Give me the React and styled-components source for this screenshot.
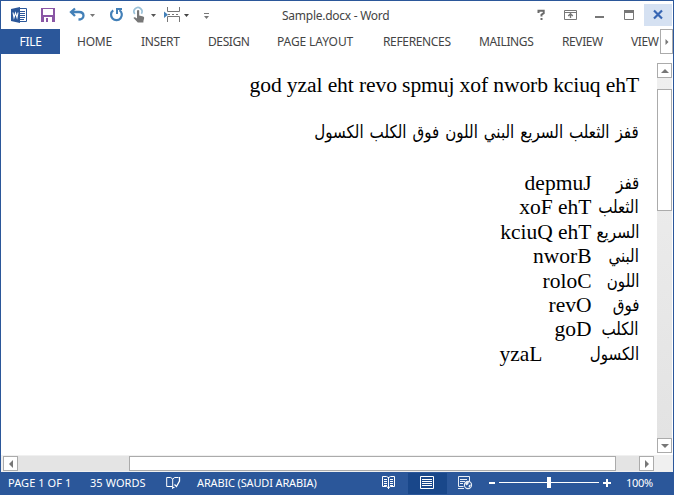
import React from "react";
import styled, { createGlobalStyle } from "styled-components";

const Global = createGlobalStyle`
  * { box-sizing: border-box; }
  body { margin: 0; background: #fff; overflow: hidden; }
  svg { display: block; }
`;

const Window = styled.div`
  width: 674px;
  height: 495px;
  display: flex;
  flex-direction: column;
  background: #fff;
  border: 1px solid #2b579a;
  border-bottom: 0;
  font-family: "Noto Sans", "Open Sans", sans-serif;
  color: #444;
  overflow: hidden;
`;

const TitleBar = styled.header`
  height: 28px;
  display: flex;
  flex: none;
`;

const QuickTools = styled.div`
  width: 281px;
  flex: none;
`;

const Title = styled.div`
  width: 239px;
  flex: none;
  font-size: 12px;
  line-height: 29px;
  letter-spacing: -0.26px;
  white-space: nowrap;
`;

const WindowControls = styled.div`
  width: 152px;
  flex: none;
`;

const Ribbon = styled.nav`
  height: 26px;
  flex: none;
  display: flex;
  align-items: flex-start;
`;

const FileTab = styled.div`
  width: 59px;
  height: 25px;
  margin-right: 17px;
  flex: none;
  background: #2b579a;
  color: #fff;
  font-size: 12px;
  line-height: 25px;
  text-align: center;
  letter-spacing: -0.3px;
`;

const Tab = styled.div`
  width: ${(p) => p.$width}px;
  margin-right: ${(p) => (p.$last ? 0 : 29)}px;
  flex: none;
  font-size: 12px;
  line-height: 25px;
  letter-spacing: ${(p) => p.$spacing}px;
  white-space: nowrap;
`;

const TabScroller = styled.button`
  width: 13px;
  height: 25px;
  margin-left: 1px;
  padding: 0;
  flex: none;
  display: grid;
  place-items: center;
  background: #fff;
  border: 1px solid #ababab;
`;

const Workspace = styled.main`
  height: 400px;
  flex: none;
  display: flex;
`;

const Page = styled.article`
  width: 655px;
  padding: 18px 17px 0 0;
  font-family: "Liberation Serif", serif;
  color: #000;
`;

const Line = styled.p`
  height: 25px;
  margin: 0 0 ${(p) => p.$after}px;
  font-size: 21.6px;
  line-height: 25px;
  letter-spacing: -0.12px;
  text-align: right;
  white-space: nowrap;
`;

const Arabic = styled.span`
  display: inline-block;
  font-family: "DejaVu Sans", sans-serif;
  font-size: 17.8px;
  letter-spacing: 0;
  word-spacing: 1.3px;
  direction: rtl;
  transform: scaleX(0.85);
  transform-origin: right center;
`;

const Entry = styled.div`
  height: 24.4px;
  display: flex;
  flex-direction: row-reverse;
  line-height: 24.4px;
  white-space: nowrap;
`;

const ArabicCell = styled.div`
  width: ${(p) => (p.$wide ? 96.5 : 47.5)}px;
  flex: none;
  direction: rtl;
`;

const LatinWord = styled.span`
  font-size: 21.5px;
`;

const VerticalScroll = styled.div`
  width: 17px;
  padding: 8px 1px 0 1px;
  display: flex;
  flex-direction: column;
`;

const ScrollButton = styled.button`
  width: 15px;
  height: 15px;
  padding: 0;
  flex: none;
  display: grid;
  place-items: center;
  background: #fff;
  border: 1px solid #ababab;
`;

const VerticalTrack = styled.div`
  height: 360px;
  padding-top: 11px;
  background: linear-gradient(#efefef, #e3e3e3);
`;

const VerticalThumb = styled.div`
  height: 122px;
  background: #fff;
  border: 1px solid #ababab;
`;

const HorizontalScroll = styled.div`
  height: 17px;
  padding: 1px 18px 1px 2px;
  flex: none;
  display: flex;
  background: #f0f0f0;
`;

const HorizontalTrack = styled.div`
  width: 621px;
  padding-left: 111px;
  flex: none;
  background: #e4e4e4;
`;

const HorizontalThumb = styled.div`
  width: 487px;
  height: 15px;
  background: #fff;
  border: 1px solid #ababab;
`;

const StatusBar = styled.footer`
  height: 23px;
  flex: none;
  display: flex;
  background: #2b579a;
  color: #fff;
`;

const StatusText = styled.div`
  width: ${(p) => p.$width}px;
  padding-left: ${(p) => p.$pad || 0}px;
  flex: none;
  font-size: 11px;
  line-height: 22px;
  letter-spacing: ${(p) => p.$spacing}px;
  white-space: nowrap;
`;

const tabs = [
  ["HOME", 35, -0.25],
  ["INSERT", 38, -0.35],
  ["DESIGN", 40, -0.4],
  ["PAGE LAYOUT", 77, -0.1],
  ["REFERENCES", 67, -0.35],
  ["MAILINGS", 54, -0.38],
  ["REVIEW", 40, -0.4],
  ["VIEW", 28, -0.4],
];

const entries = [
  ["قفز", "depmuJ"],
  ["الثعلب", "xoF ehT"],
  ["السريع", "kciuQ ehT"],
  ["البني", "nworB"],
  ["اللون", "roloC"],
  ["فوق", "revO"],
  ["الكلب", "goD"],
  ["الكسول", "yzaL"],
];

const ToolIcons = () => (
  <svg width="280" height="28" viewBox="1 1 280 28">
    <path d="M19 8.5h7.5v13H19z" fill="#fff" stroke="#2b579a" />
    <path d="M20 11.5h5M20 13.5h5M20 15.5h5M20 17.5h5M20 19.5h4" stroke="#2b579a" />
    <path d="M11 9l9-2v16l-9-2z" fill="#2b579a" />
    <path d="M13 12.5l1 5 1.5-4.5 1.5 4.5 1-5" fill="none" stroke="#fff" strokeWidth="1.1" />
    <path d="M41 8h14v14H41z" fill="#8a56a5" />
    <path d="M43 9h10v6H43zM44 17h8v5h-8z" fill="#fff" />
    <path d="M46 18h2v4h-2z" fill="#8a56a5" />
    <path d="M75 8.5L71 12l4 4M71.5 12h7.5c3.5 0 4.5 2 4.5 3.8 0 2.2-2.4 3.7-5 3.7" fill="none" stroke="#4380b8" strokeWidth="2.3" />
    <path d="M90 14h5l-2.5 3z" fill="#777" />
    <path d="M113.2 10.4a5.4 5.4 0 1 0 6.2-.2" fill="none" stroke="#4380b8" strokeWidth="2.2" />
    <path d="M117 14V9H122" fill="none" stroke="#4380b8" strokeWidth="2" />
    <path d="M134.8 14a4 4 0 1 1 6.6-.3" fill="none" stroke="#9bc1d8" strokeWidth="1.7" />
    <path d="M137 10.5q1.2-1 2.2 0v5l4 1q1.3.5.9 2l-.7 2.5V22.5h-5.6L133.5 18q.6-1.4 2-.4l1.5 1z" fill="#777" />
    <path d="M151 14h5l-2.5 3z" fill="#555" />
    <path d="M164 11.5l4 3.2-4 3.3z" fill="#4380b8" />
    <path d="M167.5 7v4.5h12V7M167.5 22v-5.5h12V22M168 14.5h2M172 14.5h2M176 14.5h2" fill="none" stroke="#777" />
    <path d="M184 14h5l-2.5 3z" fill="#444" />
    <path d="M204 13.5h5" stroke="#777" />
    <path d="M204 16h5l-2.5 3z" fill="#777" />
  </svg>
);

const ControlIcons = () => (
  <svg width="152" height="28" viewBox="521 1 152 28">
    <path d="M644 4h28v22h-28z" fill="#d5e1f2" />
    <path d="M538.5 13v-2.2h5.2v2.4l-2.2 1.5v1.8M541.5 18v2" fill="none" stroke="#6b6b6b" strokeWidth="2" />
    <path d="M564.5 10.5h12v9h-12zM565 12.5h11" fill="none" stroke="#777" />
    <path d="M570.5 18v-4M568.2 16l2.3-2.2 2.3 2.2" fill="none" stroke="#777" strokeWidth="1.4" />
    <path d="M595 16h9v2h-9z" fill="#777" />
    <path d="M624.5 10.5h9v9h-9z" fill="none" stroke="#777" />
    <path d="M624 10h10v3h-10z" fill="#777" />
    <path d="M654 10.5l8 8M662 10.5l-8 8" stroke="#3665b3" strokeWidth="2.2" />
  </svg>
);

const arrows = {
  up: "M0 6l4-4 4 4z",
  down: "M0 2l4 4 4-4z",
  left: "M6 0L2 4l4 4z",
  right: "M2 0l4 4-4 4z",
};

const Arrow = ({ direction, size = 8 }) => (
  <svg width={size} height={size} viewBox="0 0 8 8">
    <path d={arrows[direction]} fill="#777" />
  </svg>
);

const ProofIcon = () => (
  <svg width="31" height="23" viewBox="166 472 31 23">
    <path d="M172.5 486.5h-5.8v-9h4l2 1.5 2-1.5h3.8M172.7 479v10M172.5 487.5h2" fill="none" stroke="#fff" />
    <path d="M174.5 484.5l2 2 3-5.5V477" fill="none" stroke="#fff" strokeWidth="1.3" />
  </svg>
);

const ViewIcons = () => (
  <svg width="256" height="23" viewBox="370 472 256 23">
    <path d="M408 473h39v21h-39z" fill="#19478a" />
    <path d="M382.5 476.5h4l2 1.2 2-1.2h4v10h-4l-2 1.5-2-1.5h-4zM388.5 477v12" fill="none" stroke="#fff" />
    <path d="M384 479.5h3M384 481.5h3M384 483.5h3M384 485.5h3M390 479.5h3M390 481.5h3M390 483.5h3M390 485.5h3" stroke="#fff" />
    <path d="M420.5 476.5h13v12h-13z" fill="none" stroke="#fff" />
    <path d="M422 479.5h10M422 481.5h10M422 483.5h10M422 485.5h10" stroke="#fff" />
    <path d="M469.5 481v-4.5h-11v10h5M460 479.5h7M460 481.5h5M460 483.5h3M458 488.5h6" fill="none" stroke="#e7edf5" />
    <circle cx="468" cy="485" r="3.6" fill="#2b579a" stroke="#e7edf5" strokeWidth="1.1" />
    <path d="M465 483l2-1.5 2 1-1 2-2 1zM469 485l2-.5-1 3-1.5-.5z" fill="#e7edf5" />
    <path d="M489 482h6v2h-6zM603 482h8v2h-8zM606 479h2v8h-2zM547 477h4v11h-4z" fill="#fff" />
    <path d="M499 482.5h100" stroke="#fff" />
  </svg>
);

export default function App() {
  return (
    <Window>
      <Global />
      <TitleBar>
        <QuickTools><ToolIcons /></QuickTools>
        <Title>Sample.docx - Word</Title>
        <WindowControls><ControlIcons /></WindowControls>
      </TitleBar>
      <Ribbon>
        <FileTab>FILE</FileTab>
        {tabs.map(([name, width, spacing], i) => (
          <Tab key={name} $width={width} $spacing={spacing} $last={i === tabs.length - 1}>{name}</Tab>
        ))}
        <TabScroller aria-label="More tabs"><Arrow direction="right" size={6} /></TabScroller>
      </Ribbon>
      <Workspace>
        <Page>
          <Line $after={21}>god yzal eht revo spmuj xof nworb kciuq ehT</Line>
          <Line $after={27}><Arabic>قفز الثعلب السريع البني اللون فوق الكلب الكسول</Arabic></Line>
          {entries.map(([arabic, latin]) => (
            <Entry key={arabic}>
              <ArabicCell $wide={latin === "yzaL"}><Arabic>{arabic}</Arabic></ArabicCell>
              <LatinWord>{latin}</LatinWord>
            </Entry>
          ))}
        </Page>
        <VerticalScroll>
          <ScrollButton aria-label="Scroll up"><Arrow direction="up" /></ScrollButton>
          <VerticalTrack><VerticalThumb /></VerticalTrack>
          <ScrollButton aria-label="Scroll down"><Arrow direction="down" /></ScrollButton>
        </VerticalScroll>
      </Workspace>
      <HorizontalScroll>
        <ScrollButton aria-label="Scroll left"><Arrow direction="left" /></ScrollButton>
        <HorizontalTrack><HorizontalThumb /></HorizontalTrack>
        <ScrollButton aria-label="Scroll right"><Arrow direction="right" /></ScrollButton>
      </HorizontalScroll>
      <StatusBar>
        <StatusText $width={89} $pad={7} $spacing={0.08}>PAGE 1 OF 1</StatusText>
        <StatusText $width={76} $spacing={0.08}>35 WORDS</StatusText>
        <ProofIcon />
        <StatusText $width={173} $spacing={-0.15}>ARABIC (SAUDI ARABIA)</StatusText>
        <ViewIcons />
        <StatusText $width={46} $spacing={-0.3}>100%</StatusText>
      </StatusBar>
    </Window>
  );
}
